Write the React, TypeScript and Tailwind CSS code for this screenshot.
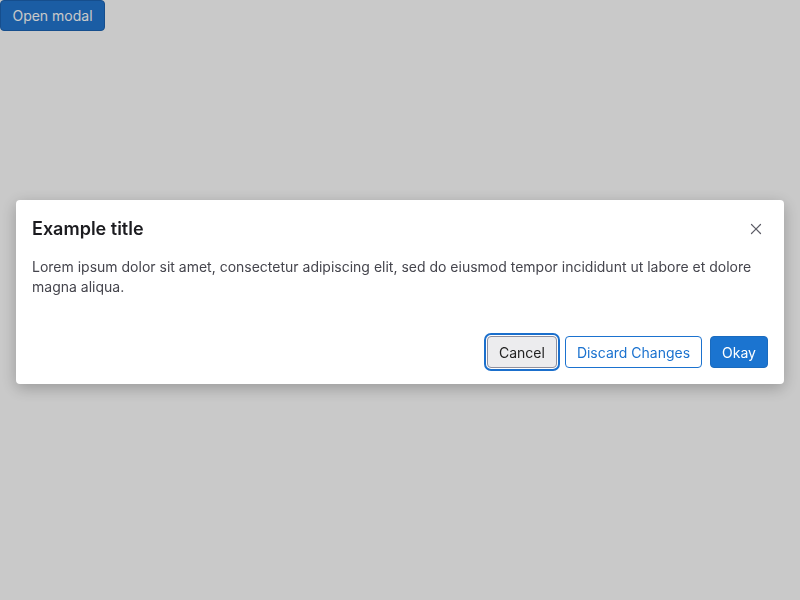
import React from 'react';
import { X } from 'lucide-react';

const App = () => {
  return (
    <div className="relative w-[800px] h-[600px] bg-white font-['Inter','Noto_Sans',sans-serif]">
      <button className="h-[31px] px-[11px] rounded-[4px] bg-[#2377d0] border border-[#1c64b3] text-white text-[14px] w-[105px]">
        Open modal
      </button>

      {/* Backdrop */}
      <div className="fixed inset-0 bg-black/[0.21] flex items-center px-4">
        <div className="w-full bg-white rounded-[4px] shadow-[0_4px_16px_rgba(0,0,0,0.25)] mt-[-16px]">
          <div className="flex items-center justify-between px-4 pt-4 pb-[10px]">
            <h2 className="text-[18px] leading-[25px] font-semibold text-[#1b1b1f]">Example title</h2>
            <button className="w-6 h-6 flex items-center justify-center text-[#5c5c66]">
              <X className="w-[18px] h-[18px]" strokeWidth={1.6} />
            </button>
          </div>
          <p className="px-4 pt-[6px] text-[14px] leading-5 text-[#45454d]">
            Lorem ipsum dolor sit amet, consectetur adipiscing elit, sed do eiusmod tempor incididunt ut labore et dolore magna aliqua.
          </p>
          <div className="flex justify-end gap-2 px-4 pt-[39px] pb-4">
            <button className="h-8 px-[11px] rounded-[4px] bg-[#ececee] border border-[#8f8f9d] text-[14px] text-[#222] outline-2 outline-offset-1 outline-[#1b6fcc]">
              Cancel
            </button>
            <button className="h-8 px-[11px] rounded-[4px] bg-white border border-[#1b72cf] text-[14px] text-[#1b72cf]">
              Discard Changes
            </button>
            <button className="h-8 px-[11px] rounded-[4px] bg-[#1b74d0] border border-[#1a6bbf] text-[14px] text-white">
              Okay
            </button>
          </div>
        </div>
      </div>
    </div>
  );
};

export default App;
